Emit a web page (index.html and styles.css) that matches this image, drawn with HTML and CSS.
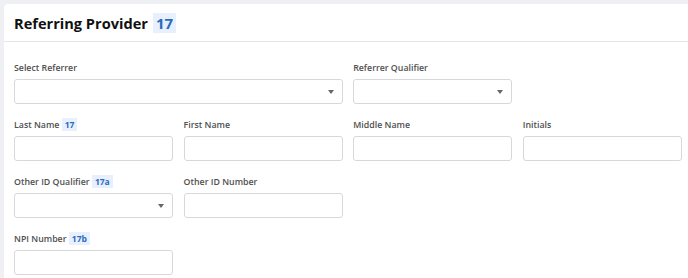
FILE: index.html
```html
<!DOCTYPE html>
<html>
<head>
<meta charset="utf-8">
<link rel="stylesheet" href="styles.css">
</head>
<body>
<div class="card">
  <div class="card-header">
    <h2 class="title">Referring Provider <span class="badge badge-lg">17</span></h2>
  </div>
  <div class="card-body">
    <div class="grid">
      <div class="field span2">
        <label class="label">Select Referrer</label>
        <div class="input select"><span class="caret"></span></div>
      </div>
      <div class="field">
        <label class="label">Referrer Qualifier</label>
        <div class="input select"><span class="caret"></span></div>
      </div>
      <div class="field"></div>

      <div class="field">
        <label class="label">Last Name <span class="badge">17</span></label>
        <div class="input"></div>
      </div>
      <div class="field">
        <label class="label">First Name</label>
        <div class="input"></div>
      </div>
      <div class="field">
        <label class="label">Middle Name</label>
        <div class="input"></div>
      </div>
      <div class="field">
        <label class="label">Initials</label>
        <div class="input"></div>
      </div>

      <div class="field">
        <label class="label">Other ID Qualifier <span class="badge">17a</span></label>
        <div class="input select"><span class="caret"></span></div>
      </div>
      <div class="field">
        <label class="label">Other ID Number</label>
        <div class="input"></div>
      </div>
      <div class="field"></div>
      <div class="field"></div>

      <div class="field">
        <label class="label">NPI Number <span class="badge">17b</span></label>
        <div class="input"></div>
      </div>
    </div>
  </div>
</div>
</body>
</html>
```
FILE: styles.css
```css
html, body {
  margin: 0;
  padding: 0;
}
body {
  background: #eef0f4;
  font-family: "Open Sans", "Noto Sans", sans-serif;
  padding: 4px 0 0 4px;
  height: 100vh;
  box-sizing: border-box;
  overflow: hidden;
}
.card {
  background: #ffffff;
  border-radius: 4px 0 0 0;
  height: 100%;
  overflow: hidden;
}
.card-header {
  height: 37px;
  border-bottom: 1px solid #e3e5e9;
  display: flex;
  align-items: center;
  padding-left: 10px;
}
.title {
  margin: 0;
  font-size: 14.6px;
  font-weight: 700;
  color: #111;
  display: flex;
  align-items: center;
  gap: 5px;
  line-height: 20px;
}
.badge {
  display: inline-block;
  background: #e7f0fc;
  color: #2a6bc2;
  font-weight: 700;
  font-size: 8.5px;
  line-height: 13px;
  padding: 0 3px;
  margin-left: 0;
}
.badge-lg {
  font-size: 15px;
  line-height: 20px;
  padding: 0 3px;
}
.card-body {
  padding: 19px 10px 0 10px;
}
.grid {
  display: grid;
  grid-template-columns: repeat(4, 159px);
  column-gap: 10.6px;
  row-gap: 14px;
}
.span2 {
  grid-column: span 2;
}
.label {
  display: block;
  font-size: 8.8px;
  font-weight: 600;
  color: #505050;
  line-height: 14px;
  height: 14px;
  margin-bottom: 4px;
}
.input {
  height: 25px;
  box-sizing: border-box;
  border: 1px solid #d6d8db;
  border-radius: 3px;
  background: #fff;
  position: relative;
}
.select .caret {
  position: absolute;
  right: 8px;
  top: 10px;
  width: 0;
  height: 0;
  border-left: 3.5px solid transparent;
  border-right: 3.5px solid transparent;
  border-top: 4px solid #666;
}
```
